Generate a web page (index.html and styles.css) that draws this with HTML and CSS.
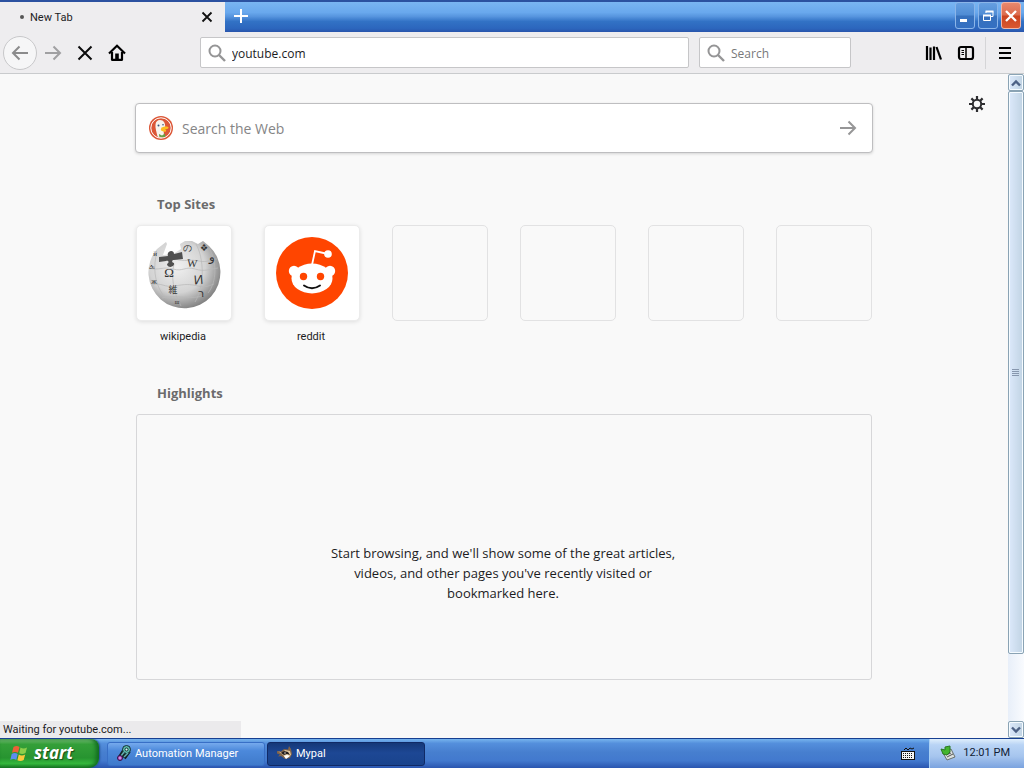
FILE: index.html
```html
<!DOCTYPE html>
<html lang="en">
<head>
<meta charset="utf-8">
<title>New Tab</title>
<link rel="stylesheet" href="styles.css">
</head>
<body>
<header class="titlebar">
  <div class="tab">
    <span class="tab-dot"></span>
    <span class="tab-title">New Tab</span>
    <button class="tab-close" aria-label="Close tab"><svg width="12" height="12" viewBox="0 0 12 12"><path d="M1.500 1.500l9 9M10.500 1.500l-9 9" stroke="#111" stroke-width="1.800"/></svg></button>
  </div>
  <button class="new-tab" aria-label="New tab"><svg width="16" height="16" viewBox="0 0 16 16"><path d="M8 1v14M1 8h14" stroke="#fff" stroke-width="2"/></svg></button>
  <div class="window-buttons">
    <button class="win" aria-label="Minimize"><svg width="18" height="24" viewBox="0 0 18 24"><path d="M4 16.500h7" stroke="#fff" stroke-width="3"/></svg></button>
    <button class="win" aria-label="Restore"><svg width="18" height="24" viewBox="0 0 18 24" fill="none" stroke="#fff"><path d="M7 9V7.500h7v5h-2"/><path d="M6.500 7.500h8" stroke-width="2"/><path d="M4.500 11.500h7v5h-7z"/><path d="M4 11.500h8" stroke-width="2"/></svg></button>
    <button class="win win-close" aria-label="Close"><svg width="18" height="24" viewBox="0 0 18 24"><path d="M4 7l10 10M14 7L4 17" stroke="#fff" stroke-width="2.300"/></svg></button>
  </div>
</header>

<nav class="toolbar" aria-label="Navigation">
  <div class="nav-buttons">
    <button class="tool back" aria-label="Back"><svg width="18" height="16" viewBox="0 0 18 16" fill="none" stroke="#8b8b8c" stroke-width="2"><path d="M17 8H2M8.500 1.500L2 8l6.500 6.500"/></svg></button>
    <button class="tool" aria-label="Forward"><svg width="18" height="16" viewBox="0 0 18 16" fill="none" stroke="#a0a0a2" stroke-width="2"><path d="M1 8h15M9.500 1.500L16 8l-6.500 6.500"/></svg></button>
    <button class="tool" aria-label="Stop"><svg width="16" height="16" viewBox="0 0 16 16" stroke="#0c0c0d" stroke-width="2"><path d="M1.500 1.500l13 13M14.500 1.500l-13 13"/></svg></button>
    <button class="tool" aria-label="Home"><svg width="18" height="18" viewBox="0 0 18 18"><path d="M1 9.500L9 1.800l8 7.700" fill="none" stroke="#000" stroke-width="2.200"/><path d="M4 8v7.800h10V8" fill="none" stroke="#000" stroke-width="2.200" stroke-linejoin="round"/><path d="M7.200 16V9.500h3.600V16z"/></svg></button>
  </div>
  <label class="field url-field">
    <svg width="18" height="18" viewBox="0 0 18 18" fill="none" stroke="#959596" stroke-width="2"><circle cx="7" cy="7" r="5.500"/><path d="M11 11l6 6" stroke-width="2.400"/></svg>
    <input type="text" value="youtube.com" aria-label="Address">
  </label>
  <label class="field search-field">
    <svg width="18" height="18" viewBox="0 0 18 18" fill="none" stroke="#959596" stroke-width="2"><circle cx="7" cy="7" r="5.500"/><path d="M11 11l6 6" stroke-width="2.400"/></svg>
    <input type="text" placeholder="Search" aria-label="Search">
  </label>
  <div class="tool-buttons">
    <button class="tool" aria-label="Library"><svg width="18" height="16" viewBox="0 0 18 16" stroke="#000" stroke-width="2"><path d="M2 1v14M5.500 2.500V15M9 1.500V15" stroke-width="2.200"/><path d="M11.500 2l4.500 12.500" stroke-width="2.200"/></svg></button>
    <button class="tool" aria-label="Sidebars"><svg width="18" height="16" viewBox="0 0 18 16" fill="none" stroke="#000"><rect x="2" y="2" width="14" height="12" rx="2" stroke-width="2.200"/><path d="M9 2v12" stroke-width="1.500"/><path d="M4.500 5.500h2.500M4.500 7.500h2.500M4.500 9.500h2.500"/></svg></button>
    <span class="separator"></span>
    <button class="tool" aria-label="Menu"><svg width="16" height="16" viewBox="0 0 16 16" stroke="#000" stroke-width="2"><path d="M2 3h12M2 8h12M2 13h12"/></svg></button>
  </div>
</nav>

<div class="viewport">
  <main class="page">
    <button class="settings" aria-label="Customize page"><svg width="16" height="16" viewBox="0 0 16 16" fill="none" stroke="#2d2d30"><circle cx="8" cy="8" r="4.200" stroke-width="2"/><path d="M8 0v4M8 12v4M0 8h4M12 8h4M2.400 2.400L5 5M11 11l2.600 2.600M2.400 13.600L5 11M11 5l2.600-2.600" stroke-width="2.200"/></svg></button>
    <form class="web-search">
      <svg width="24" height="24" viewBox="0 0 24 24"><circle cx="12" cy="12" r="12" fill="#dc5737"/><circle cx="12" cy="12" r="10.200" fill="none" stroke="#fff" stroke-width="1"/><path d="M8.500 20.500C7.600 16 6 11.500 6.500 8.500c.3-2.800 2-4.500 4.500-4.500 3.800 0 5.200 3 5.200 6.500l-1.500 4.500.3 6.300c-2 .8-4.500.4-6.500-.8z" fill="#f7f3ec"/><path d="M12.500 11.500c2-.9 6.500-1.700 7 0 .2 1.500-3 1.700-3.500 2 1.500.5 1.600 2 .3 2.200-2 .2-4.500-.7-4.500-2.200z" fill="#fdbd20"/><path d="M10 18l3 1.500 3-2 .2 3.500-3 .3-3-.5z" fill="#67a046"/><circle cx="9.500" cy="9.500" r="1" fill="#35557c"/><circle cx="14" cy="8.800" r=".8" fill="#35557c"/></svg>
      <input type="text" placeholder="Search the Web" aria-label="Search the Web">
      <button class="go" aria-label="Search"><svg width="18" height="16" viewBox="0 0 18 16" fill="none" stroke="#969697" stroke-width="2"><path d="M1 8h15M9.500 1.500L16 8l-6.500 6.500"/></svg></button>
    </form>

    <section class="top-sites">
      <h2>Top Sites</h2>
      <div class="tiles">
        <a class="site" href="#wikipedia">
          <span class="tile filled">
            <svg width="74" height="74" viewBox="0 0 74 74">
              <defs><radialGradient id="globe" cx="40%" cy="38%" r="65%"><stop offset="0" stop-color="#f0f0f0"/><stop offset=".6" stop-color="#d3d3d3"/><stop offset="1" stop-color="#808080"/></radialGradient></defs>
              <path d="M10 13L19 6l1 2-4 11 10-1 8-5-1-5 5-3 7 0 6 3 5-3 6 5A36 36 0 1 1 10 13z" fill="url(#globe)"/>
              <g fill="none" stroke="#b8b8b8" stroke-width=".7"><path d="M10 16c-4 14-3 30 6 43M27 28c-3 12-1 28 7 42M49 8c8 14 9 42-1 58M62 12c8 13 8 34-1 45"/><path d="M2 32c10 3 14-2 24 1s12-3 22 0 15 0 23-1M5 49c10-3 12 3 23 1s14-2 23 0 12-1 16-2M28 23c10 3 15 0 24 2s12-2 18-2M15 62c14-4 30 3 42-3"/></g>
              <path d="M12 21l9-1c-2-5 6-7 6-2l8-2 1 7-9 1c-3 0-2 3 0 3 1 5-7 5-7 1 3-2 1-4-1-3l-7 1z" fill="#505050"/>
              <g fill="#343434" font-family="Liberation Serif, serif" font-size="13" text-anchor="middle"><text x="22" y="41">Ω</text><text x="45" y="31" font-size="11" transform="rotate(5 45 31)">W</text><text x="52" y="48" font-family="Liberation Sans, sans-serif" transform="rotate(-5 52 48)">И</text><text x="26" y="57" font-size="9" font-family="Noto Sans CJK JP, sans-serif">維</text><text x="54" y="61" font-size="11" font-family="DejaVu Sans, sans-serif">ר</text><text x="65" y="25" font-size="12">و</text><text x="57" y="15" font-size="9">❖</text><text x="40" y="15" font-size="9">の</text><text x="5" y="33" font-size="9">க</text><text x="7" y="48" font-size="8">ж</text><text x="8" y="20" font-size="7">й</text><text x="30" y="68" font-size="6">ш</text></g>
            </svg>
          </span>
          <span class="site-name">wikipedia</span>
        </a>
        <a class="site" href="#reddit">
          <span class="tile filled">
            <svg width="74" height="74" viewBox="0 0 74 74"><circle cx="37" cy="37" r="36" fill="#ff4500"/><path d="M37 29l3-14 13 3" fill="none" stroke="#fff" stroke-width="1.800"/><g fill="#fff"><circle cx="53" cy="18" r="3.800"/><circle cx="19" cy="35" r="5.200"/><circle cx="55" cy="35" r="5.200"/><ellipse cx="37" cy="42.500" rx="20.500" ry="15"/></g><g fill="#ff4500"><circle cx="28.500" cy="40.500" r="3.700"/><circle cx="45.500" cy="40.500" r="3.700"/></g><path d="M29 49.500q8 5.500 16 0" fill="none" stroke="#111" stroke-width="1.900" stroke-linecap="round"/></svg>
          </span>
          <span class="site-name">reddit</span>
        </a>
        <div class="site"><span class="tile"></span></div>
        <div class="site"><span class="tile"></span></div>
        <div class="site"><span class="tile"></span></div>
        <div class="site"><span class="tile"></span></div>
      </div>
    </section>

    <section class="highlights">
      <h2>Highlights</h2>
      <div class="empty">
        <p>Start browsing, and we'll show some of the great articles, videos, and other pages you've recently visited or bookmarked here.</p>
      </div>
    </section>
    <div class="status" role="status">Waiting for youtube.com...</div>
  </main>
  <div class="scrollbar">
    <button class="arrow" aria-label="Scroll up"><svg width="10" height="8" viewBox="0 0 10 8"><path d="M1 6.500l4-4 4 4" fill="none" stroke="#4d6185" stroke-width="2.400"/></svg></button>
    <div class="track"><div class="thumb"><svg width="8" height="8" viewBox="0 0 8 8" stroke="#8797ae"><path d="M0 .5h7M0 2.500h7M0 4.500h7M0 6.500h7"/></svg></div></div>
    <button class="arrow" aria-label="Scroll down"><svg width="10" height="8" viewBox="0 0 10 8"><path d="M1 1.500l4 4 4-4" fill="none" stroke="#4d6185" stroke-width="2.400"/></svg></button>
  </div>
</div>

<footer class="taskbar">
  <button class="start">
    <svg width="20" height="20" viewBox="0 0 20 20"><path d="M3.500 4q3-2 6 0L8 9.800q-3-1.800-6 0z" fill="#ee6038"/><path d="M10.500 4.500q3 1.800 6.500 0L15.500 10q-3 1.800-6.300.300z" fill="#8dce4a"/><path d="M1.700 11q3-1.800 6 0L6.300 17q-3-1.800-6 0z" fill="#5c8df0"/><path d="M8.800 11.500q3 1.800 6.400 0L13.700 17q-3 1.800-6.300.300z" fill="#fbc83c"/></svg>
    <span>start</span>
  </button>
  <div class="tasks">
    <button class="task"><svg width="16" height="16" viewBox="0 0 16 16" fill="none"><path d="M4 12L9 4M8 13l5-7" stroke="#122" stroke-width="4"/><circle cx="10.500" cy="4.500" r="4" fill="#5dbcab" stroke="#132c35"/><circle cx="10.500" cy="4.500" r="1.500" fill="#d6fff1" stroke="#132c35"/><path d="M5 11l3-4M8 12l4-4" stroke="#62aeb0" stroke-width="1.500"/><circle cx="4" cy="13" r="2.500" fill="#b553c6" stroke="#301046"/><circle cx="4" cy="13" r=".7" fill="#fff"/></svg><span>Automation Manager</span></button>
    <button class="task active"><svg width="16" height="16" viewBox="0 0 16 16"><path d="M0 6l4 .5L7 4l4 .5L12 1l2 3 1 5-2 4-5 1-4-3-3 .5 2-2-3-1z" fill="#826449"/><path d="M1 6l4 2 3-3 5 1 1 4-5 3-3-3z" fill="#e3c79d"/><path d="M4 8l3-2 4 1 2 3-3-1-3 1z" fill="#211b1b"/><path d="M7 11l3-1 3 1-4 3z" fill="#fff"/><circle cx="8" cy="8" r=".7" fill="#fff"/></svg><span>Mypal</span></button>
  </div>
  <button class="keyboard" aria-label="On-screen keyboard"><svg width="14" height="14" viewBox="0 0 14 14"><path d="M3 3l2-2 2 2 2-2 2 1 2-1" fill="none" stroke="#111"/><rect x=".5" y="4.500" width="13" height="8" fill="#f4f4f4" stroke="#111"/><path d="M2 6.500h10M2 8.500h10M2 10.500h10" stroke="#111" stroke-dasharray="1 1"/></svg></button>
  <div class="tray">
    <svg width="16" height="16" viewBox="0 0 16 16"><path d="M3 8l8-4 4 8-8 3z" fill="#dce1df" stroke="#68716f"/><path d="M6 10l5-2M7 12l6-3" stroke="#555"/><path d="M1 4l4 1V2l5-1v6l-3 3-4-1z" fill="#43b52e" stroke="#2b7824"/></svg>
    <time>12:01 PM</time>
  </div>
</footer>
</body>
</html>
```
FILE: styles.css
```css
* { box-sizing: border-box; }

body {
  margin: 0;
  height: 100vh;
  display: flex;
  flex-direction: column;
  overflow: hidden;
  font-family: Roboto, "Open Sans", sans-serif;
  font-size: 11px;
  color: #1c1c1e;
  background: #f9f9f9;
}

button {
  display: flex;
  align-items: center;
  justify-content: center;
  padding: 0;
  border: 0;
  background: none;
  font: inherit;
  color: inherit;
}

input {
  flex: 1;
  min-width: 0;
  padding: 0;
  border: 0;
  outline: 0;
  background: none;
  font: inherit;
  color: inherit;
}

svg { flex: none; display: block; }

.titlebar {
  flex: none;
  display: flex;
  height: 32px;
  border-top: 2px solid #2b51a0;
  background: linear-gradient(#79b5f2 0, #69a8ed 35%, #5795df 48%, #3272c5 65%, #2c66bd 88%, #2955ac 100%);
}

.tab {
  display: flex;
  align-items: center;
  width: 225px;
  padding: 0 10px 0 20px;
  background: #eeedef;
}

.tab-dot { width: 4px; height: 4px; border-radius: 50%; background: #555; }
.tab-title { flex: 1; padding-left: 6px; }
.tab-close { width: 16px; height: 16px; }
.new-tab { width: 32px; height: 28px; }

.window-buttons { display: flex; gap: 3px; margin-left: auto; padding-right: 3px; }

.win {
  width: 20px;
  height: 27px;
  border: 1px solid #8bb5e9;
  border-radius: 3px;
  background: linear-gradient(#669fe1, #4f8cd4 48%, #3771bd 52%, #3470c2);
}

.win-close {
  border-color: #f3b5a5;
  background: linear-gradient(#e8886d, #dc6b4d 48%, #cb4420 52%, #da5831);
}

.toolbar {
  flex: none;
  display: flex;
  align-items: center;
  height: 42px;
  padding: 0 3px;
  border-bottom: 1px solid #c9cbcd;
  background: #eeedef;
}

.nav-buttons, .tool-buttons { display: flex; align-items: center; }
.tool { width: 32px; height: 32px; }

.back {
  width: 34px;
  height: 34px;
  border: 1px solid #c8c8ca;
  border-radius: 50%;
  background: #f6f6f7;
}

.field {
  display: flex;
  align-items: center;
  gap: 6px;
  height: 31px;
  padding: 0 7px;
  border: 1px solid #c6c6c8;
  border-radius: 2px;
  background: #fff;
  font-family: "Open Sans", sans-serif;
  font-size: 12px;
}

.field input { height: 26px; padding-top: 1px; }
.url-field { flex: 1; min-width: 0; margin-left: 67px; }
.search-field { width: 152px; margin: 0 67px 0 10px; }
.field input::placeholder { color: #78787a; opacity: 1; }
.separator { width: 1px; height: 32px; margin: 0 3px; background: #d5d5d7; }

.viewport { flex: 1; min-height: 0; display: flex; }

.page {
  position: relative;
  flex: 1;
  min-width: 0;
  overflow: hidden;
  padding: 29px 32px 0;
  background: #f9f9f9;
}

.web-search, .top-sites, .highlights { max-width: 736px; margin: 0 auto; }

.settings { position: absolute; top: 22px; right: 23px; width: 16px; height: 16px; }

.web-search {
  display: flex;
  align-items: center;
  gap: 9px;
  max-width: 738px;
  height: 50px;
  padding: 0 15px 0 13px;
  border: 1px solid #bebec0;
  border-radius: 4px;
  background: #fff;
  box-shadow: 0 1px 3px #00000026;
  font-family: "Open Sans", sans-serif;
  font-size: 14px;
}

.web-search input::placeholder { color: #858586; opacity: 1; }
.go { width: 18px; height: 32px; }

h2 {
  margin: 0;
  padding-left: 21px;
  font-family: "Open Sans", sans-serif;
  font-size: 13px;
  line-height: 20px;
  color: #6b6b6c;
}

.top-sites { padding-top: 41px; }

.tiles {
  display: grid;
  grid-template-columns: repeat(6, 96px);
  justify-content: space-between;
  margin-top: 11px;
}

.site { color: inherit; text-decoration: none; text-align: center; }

.tile {
  display: flex;
  align-items: center;
  justify-content: center;
  height: 96px;
  border: 1px solid #e2e2e3;
  border-radius: 5px;
}

.filled { border-color: #ececec; background: #fff; box-shadow: 0 1px 4px #0000001c; }
.site-name { display: block; padding: 6px 2px 0 0; line-height: 20px; }

.highlights { padding-top: 36px; }

.empty {
  display: flex;
  align-items: center;
  justify-content: center;
  height: 266px;
  margin-top: 11px;
  padding: 52px 2px 0 0;
  border: 1px solid #d7d7d9;
  border-radius: 3px;
}

.empty p {
  width: 350px;
  margin: 0;
  text-align: center;
  font-family: "Open Sans", sans-serif;
  font-size: 13px;
  line-height: 20px;
}

.status {
  position: absolute;
  left: 0;
  bottom: 0;
  width: 241px;
  padding-left: 3px;
  line-height: 17px;
  background: #ebeaec;
}

.scrollbar {
  flex: none;
  display: flex;
  flex-direction: column;
  width: 16px;
  background: linear-gradient(90deg, #e8eff9, #f9fbfe);
}

.arrow, .thumb {
  border: 1px solid #8aa3b4;
  border-radius: 2px;
  box-shadow: inset 0 0 0 1px #f5fbff;
  background: linear-gradient(90deg, #dce9fb, #c0d3e3);
}

.arrow { width: 16px; height: 17px; }
.track { flex: 1; }

.thumb {
  display: flex;
  align-items: center;
  justify-content: center;
  height: 89.4%;
}

.taskbar {
  flex: none;
  display: flex;
  height: 30px;
  border-top: 1px solid #173f91;
  color: #fff;
  background: linear-gradient(#77b4ee 0, #548fdc 15%, #477fcf 45%, #4279ce 75%, #2a55af 100%);
}

.start {
  justify-content: flex-start;
  gap: 4px;
  width: 99px;
  padding: 0 0 2px 10px;
  border-radius: 0 8px 10px 0;
  background: linear-gradient(#7dc47c 0, #349f39 18%, #279430 65%, #34b83c 85%, #197925 100%);
  box-shadow: inset -3px 0 4px #116b20, 1px 0 2px #214d8c;
  font: italic bold 17px "Open Sans", sans-serif;
  text-shadow: 1px 1px 1px #174b18;
}

.tasks { flex: 1; display: flex; gap: 2px; padding: 3px 0 2px 8px; }

.task {
  width: 158px;
  justify-content: flex-start;
  gap: 3px;
  padding: 0 0 2px 8px;
  border: 1px solid #386fc6;
  border-radius: 3px;
  background: linear-gradient(#76aaed, #4c89db 35%, #3f7acb);
}

.active {
  padding-left: 9px;
  border-color: #102a66;
  background: linear-gradient(#153878, #1d4794 45%, #19438c);
}

.keyboard { width: 43px; }

.tray {
  display: flex;
  align-items: center;
  gap: 7px;
  padding: 0 14px 2px 10px;
  border-left: 1px solid #a8d0f5;
  color: #111d36;
  background: linear-gradient(#e0effc 0, #b9d4f5 20%, #a6c5ee 60%, #7ba3df 100%);
}
```
